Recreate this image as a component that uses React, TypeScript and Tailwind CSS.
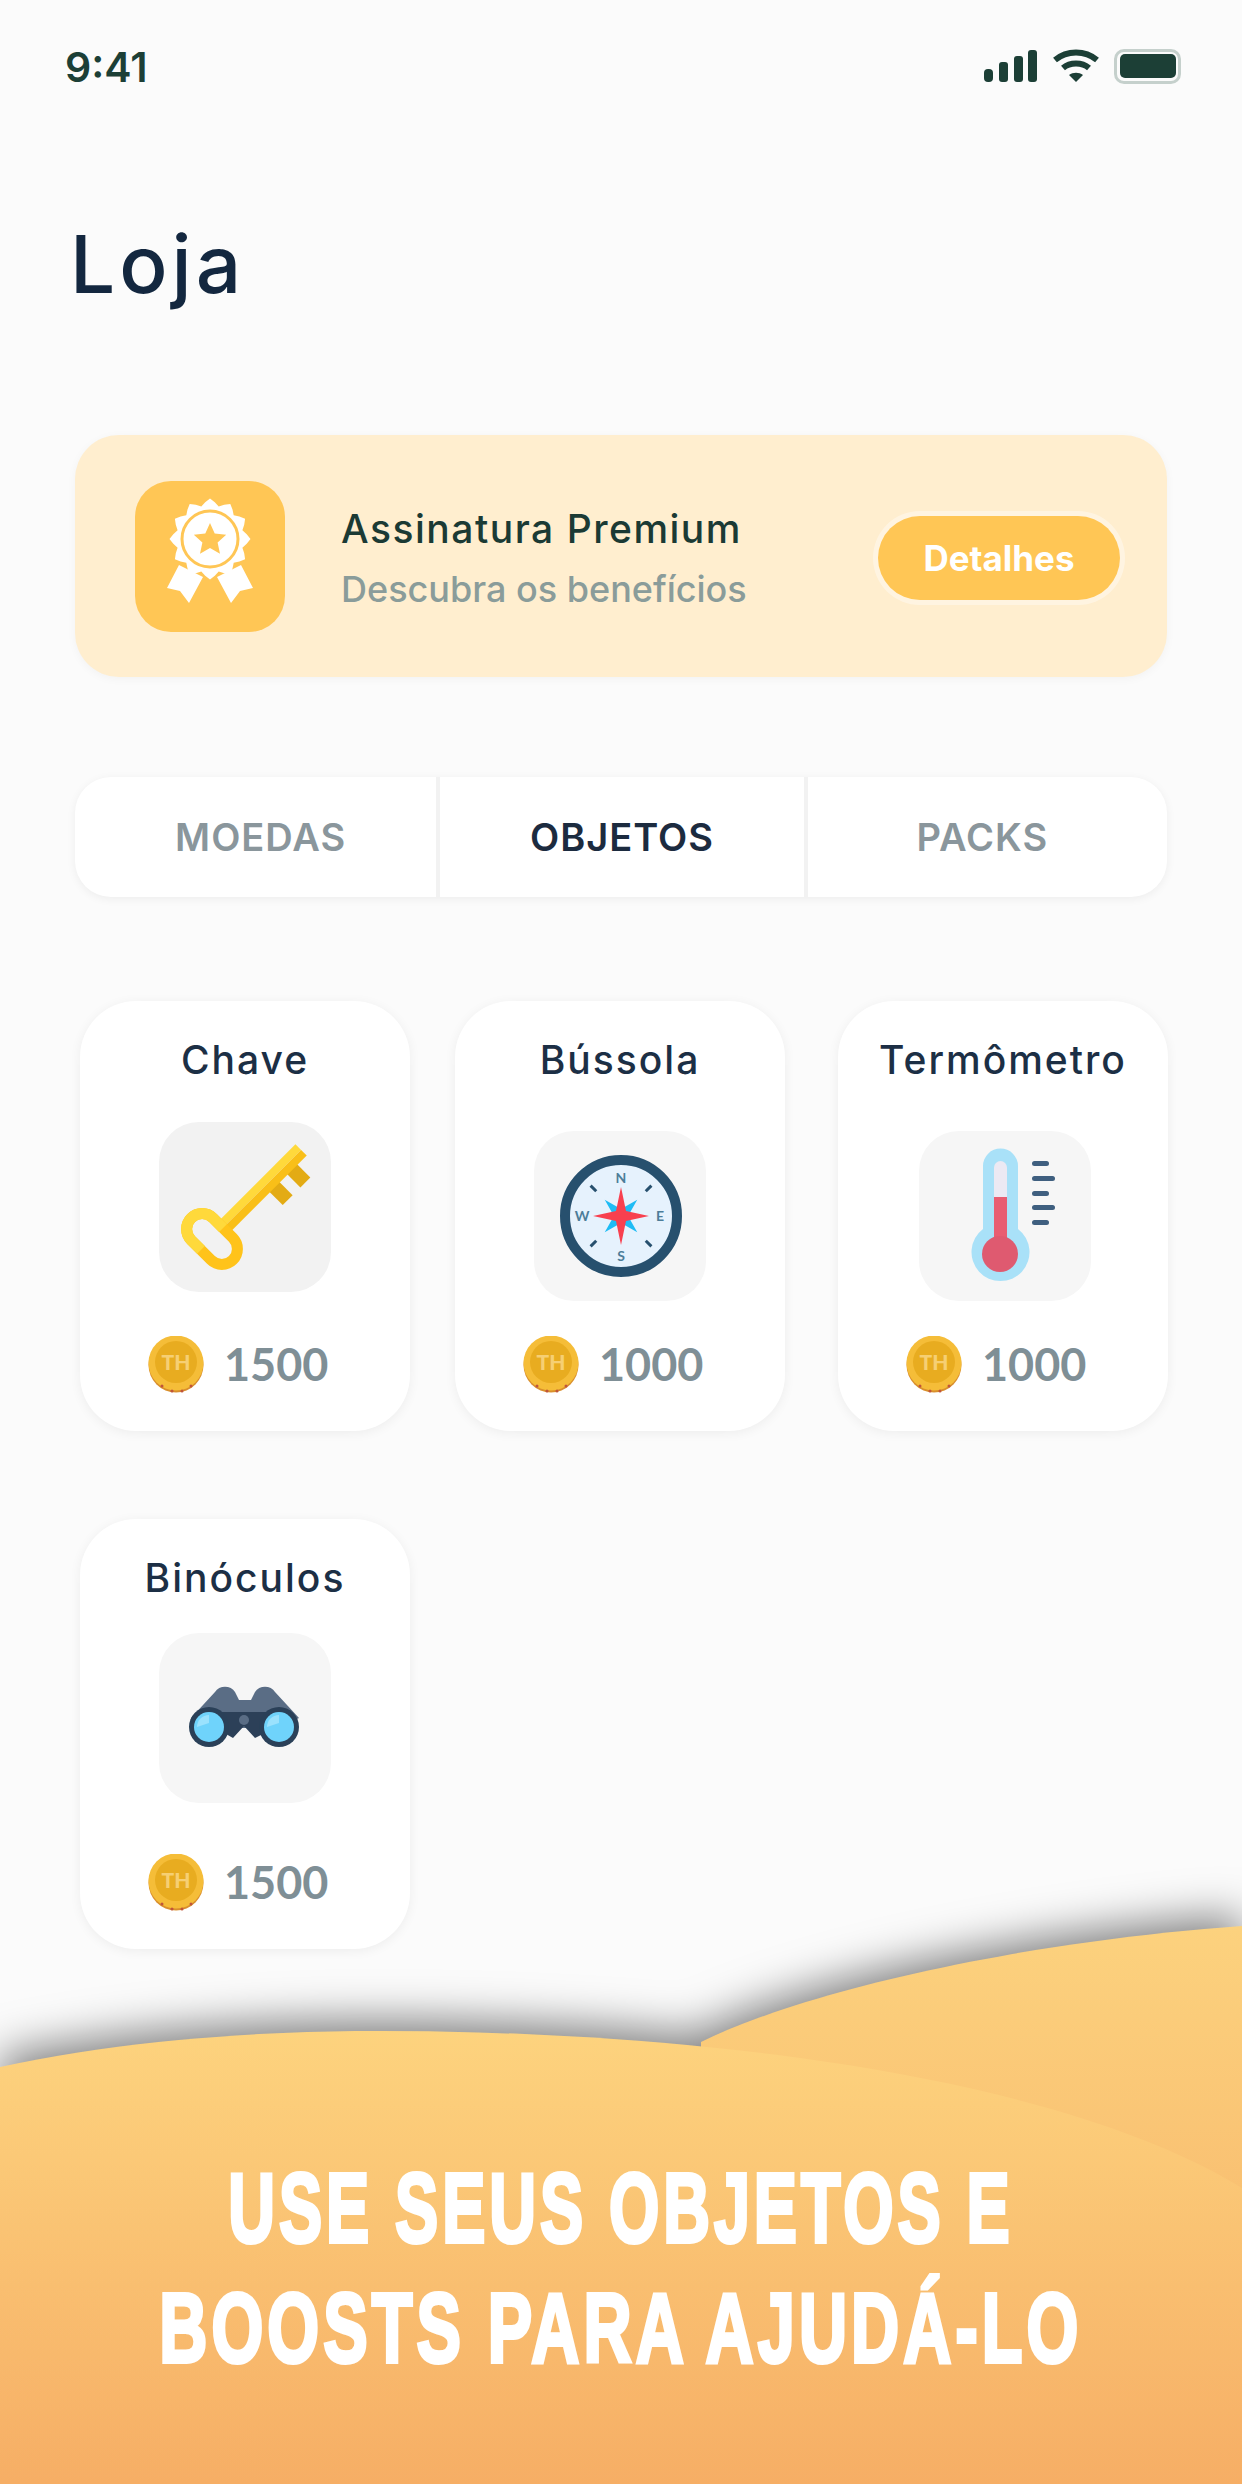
const sealPoints = Array.from({ length: 48 }, (_, i) => {
  const angle = (i / 48) * Math.PI * 2
  const radius = 37 + 3.5 * Math.cos(angle * 12)
  return `${(75 + radius * Math.sin(angle)).toFixed(1)},${(58 - radius * Math.cos(angle)).toFixed(1)}`
}).join(' ')

function star(cx: number, cy: number, outer: number, inner: number) {
  return Array.from({ length: 10 }, (_, i) => {
    const angle = (i / 10) * Math.PI * 2
    const radius = i % 2 === 0 ? outer : inner
    return `${(cx + radius * Math.sin(angle)).toFixed(1)},${(cy - radius * Math.cos(angle)).toFixed(1)}`
  }).join(' ')
}

function StatusIcons() {
  return (
    <div className="flex items-center gap-[14px]">
      <svg width="54" height="34" viewBox="0 0 54 34">
        <rect x="0" y="20" width="9" height="13" rx="4" fill="#1c3f36" />
        <rect x="15" y="13" width="9" height="20" rx="3" fill="#1c3f36" />
        <rect x="30" y="7" width="9" height="26" rx="3" fill="#1c3f36" />
        <rect x="44" y="1" width="9" height="32" rx="3" fill="#1c3f36" />
      </svg>
      <svg width="48" height="36" viewBox="0 0 48 36" fill="none" stroke="#1c3f36" strokeWidth="6">
        <path d="M3 12 C15 2 33 2 45 12" />
        <path d="M11 20 C18 14 30 14 37 20" />
        <path d="M24 34 L17 27 C21 24 27 24 31 27 Z" fill="#1c3f36" stroke="none" />
      </svg>
      <div className="flex h-[35px] w-[67px] items-center justify-center rounded-[10px] border-[3px] border-[#c5d0cc]">
        <div className="h-[24px] w-[56px] rounded-[5px] bg-[#1c3f36]" />
      </div>
    </div>
  )
}

function RibbonIcon() {
  return (
    <svg width="150" height="150" viewBox="0 0 150 150">
      <polygon points="44,84 32,107 45,110 54,122 68,96" fill="#fff" />
      <polygon points="106,84 118,107 105,110 96,122 82,96" fill="#fff" />
      <polygon points={sealPoints} fill="#fff" />
      <circle cx="75" cy="58" r="28" fill="none" stroke="#ffc655" strokeWidth="3" />
      <polygon points={star(75, 59, 17, 8)} fill="#ffc655" />
    </svg>
  )
}

function KeyIcon() {
  return (
    <svg width="172" height="170" viewBox="0 0 172 170">
      <g transform="translate(53 117) rotate(-45)">
        <rect x="74" y="6" width="14" height="20" fill="#e3ab14" />
        <rect x="99" y="6" width="14" height="20" fill="#e3ab14" />
        <rect x="20" y="-8" width="106" height="8" fill="#ffd93b" />
        <rect x="20" y="0" width="106" height="8" fill="#f9bf18" />
        <rect x="-15.500" y="-29.500" width="31" height="59" rx="15.500" fill="none" stroke="#ffc31a" strokeWidth="11" />
        <path d="M-15.500 0 V-14 a15.500 15.500 0 0 1 31 0 V0" fill="none" stroke="#ffd93b" strokeWidth="11" />
      </g>
    </svg>
  )
}

function CompassIcon() {
  const ticks = [45, 135, 225, 315]
  return (
    <svg width="172" height="170" viewBox="0 0 172 170">
      <circle cx="87" cy="85" r="56" fill="#e6f2fd" stroke="#27506e" strokeWidth="10" />
      {ticks.map((angle) => (
        <rect key={angle} x="85.500" y="42" width="3" height="8" fill="#27506e" transform={`rotate(${angle} 87 85)`} />
      ))}
      <g transform="rotate(45 87 85)">
        <polygon points="87,62 92,80 110,85 92,90 87,108 82,90 64,85 82,80" fill="#1ebcf5" />
      </g>
      <polygon points="87,56 92,80 115,85 92,90 87,114 82,90 59,85 82,80" fill="#f8404f" />
      <g fontFamily="Lato, sans-serif" fontSize="14" fontWeight="700" fill="#4d7d99" textAnchor="middle">
        <text x="87" y="52">N</text>
        <text x="87" y="130">S</text>
        <text x="48" y="90">W</text>
        <text x="126" y="90">E</text>
      </g>
    </svg>
  )
}

function ThermometerIcon() {
  return (
    <svg width="170" height="170" viewBox="0 0 170 170">
      <path d="M63 98 V35 a17.500 17.500 0 0 1 35 0 V98 a29 29 0 1 1 -35 0 Z" fill="#a9e1f8" />
      <rect x="74" y="30" width="13" height="44" rx="6.500" fill="#ece9f3" />
      <rect x="74" y="66" width="13" height="50" fill="#e85d72" />
      <circle cx="80" cy="123" r="18" fill="#df5a70" />
      <g fill="#3f5f7f">
        <rect x="112" y="30" width="17" height="5" rx="2.500" />
        <rect x="112" y="45" width="23" height="5" rx="2.500" />
        <rect x="112" y="60" width="17" height="5" rx="2.500" />
        <rect x="112" y="74" width="23" height="5" rx="2.500" />
        <rect x="112" y="89" width="17" height="5" rx="2.500" />
      </g>
    </svg>
  )
}

function BinocularsIcon() {
  return (
    <svg width="172" height="172" viewBox="0 0 172 172">
      <path d="M32 86 L56 60 C60 53 72 53 76 60 L80 68 H92 L96 60 C100 53 112 53 116 60 L140 86 L120 96 H52 Z" fill="#5a6d85" />
      <path d="M58 80 H114 L112 98 L96 106 L85 94 L74 106 L60 98 Z" fill="#2c4058" />
      <circle cx="85" cy="88" r="5" fill="#5a6d85" />
      <circle cx="50" cy="95" r="20" fill="#2a4058" />
      <circle cx="120" cy="95" r="20" fill="#2a4058" />
      <circle cx="50" cy="95" r="15" fill="#6fd3fb" />
      <circle cx="120" cy="95" r="15" fill="#6fd3fb" />
      <path d="M38 95 a12 12 0 0 1 12 -12 v8 Z" fill="#9be2fd" />
      <path d="M108 95 a12 12 0 0 1 12 -12 v8 Z" fill="#9be2fd" />
    </svg>
  )
}

function Coin() {
  return (
    <svg width="56" height="57" viewBox="0 0 56 57" className="shrink-0">
      <circle cx="28" cy="29" r="27.500" fill="#d98f2c" />
      <circle cx="28" cy="27" r="27.500" fill="#f5bd38" />
      <circle cx="28" cy="26" r="21" fill="#e8ac20" />
      <text x="28" y="34" textAnchor="middle" fontFamily="Lato, sans-serif" fontWeight="900" fontSize="21" fill="#f6cf73">
        TH
      </text>
      <g fill="#c0553a">
        <circle cx="14" cy="50" r="1.500" />
        <circle cx="24" cy="55" r="1.500" />
        <circle cx="34" cy="55" r="1.500" />
        <circle cx="43" cy="50" r="1.500" />
      </g>
    </svg>
  )
}

const tabs = [
  { label: 'MOEDAS', className: 'w-[362px] pl-[10px] text-[#8a969c]' },
  { label: 'OBJETOS', className: 'w-[372px] border-x-[4px] border-[#f2f2f2] text-[#1c2b3f]' },
  { label: 'PACKS', className: 'w-[360px] pr-[10px] text-[#8a969c]' },
]

interface CardProps {
  name: string
  price: number
  imageClass: string
  children: React.ReactNode
}

function Card({ name, price, imageClass, children }: CardProps) {
  return (
    <div className="flex h-[430px] w-[330px] flex-col items-center rounded-[56px] bg-white shadow-[0_2px_12px_rgba(0,0,0,0.06)]">
      <p className="mt-[37px] h-[44px] text-[39px] leading-[44px] font-medium tracking-[2px] text-[#1c2f45]">{name}</p>
      <div className={`flex h-[170px] w-[172px] items-center justify-center rounded-[40px] ${imageClass}`}>
        {children}
      </div>
      <div className="mt-auto mb-[38px] flex w-full items-center gap-[20px] pl-[68px]">
        <Coin />
        <span className="font-['Lato',sans-serif] text-[45px] leading-[57px] font-bold text-[#7f8f96]">{price}</span>
      </div>
    </div>
  )
}

export default function App() {
  return (
    <div className="relative h-[2484px] w-[1242px] overflow-hidden bg-[#fbfbfb] font-['Inter',sans-serif]">
      <div className="flex h-[89px] items-end justify-between pr-[61px] pl-[65px]">
        <span className="text-[41px] leading-[44px] font-semibold text-[#1c3f36]">9:41</span>
        <div className="mb-[5px]">
          <StatusIcons />
        </div>
      </div>

      <h1 className="mt-[135px] ml-[70px] text-[80px] leading-[80px] font-medium tracking-[4px] text-[#13273f]">Loja</h1>

      <div className="mx-[75px] mt-[131px] flex h-[242px] items-center rounded-[44px] bg-[#ffeecf] pr-[47px] pl-[60px] shadow-[0_2px_10px_rgba(0,0,0,0.04)]">
        <div className="flex h-[151px] w-[150px] items-center justify-center rounded-[36px] bg-[#ffc655]">
          <RibbonIcon />
        </div>
        <div className="mt-[6px] ml-[56px] flex flex-col gap-[16px]">
          <p className="text-[39px] leading-[44px] font-medium tracking-[1.5px] text-[#1b3a34]">Assinatura Premium</p>
          <p className="text-[36px] leading-[44px] font-medium text-[#8a9c9a]">Descubra os benefícios</p>
        </div>
        <button className="mt-[4px] ml-auto h-[84px] w-[242px] rounded-full bg-[#ffc655] text-[35px] font-bold text-white shadow-[0_0_0_5px_rgba(255,250,240,0.55)]">
          Detalhes
        </button>
      </div>

      <div className="mx-[75px] mt-[100px] flex h-[120px] rounded-[36px] bg-white shadow-[0_2px_10px_rgba(0,0,0,0.06)]">
        {tabs.map((tab) => (
          <div key={tab.label} className={`flex items-center justify-center text-[38px] font-semibold tracking-[1px] ${tab.className}`}>
            {tab.label}
          </div>
        ))}
      </div>

      <div className="mt-[104px] ml-[80px] flex">
        <Card name="Chave" price={1500} imageClass="mt-[40px] bg-[#f2f2f2]">
          <KeyIcon />
        </Card>
        <div className="ml-[45px]">
          <Card name="Bússola" price={1000} imageClass="mt-[49px] bg-[#f6f6f6]">
            <CompassIcon />
          </Card>
        </div>
        <div className="ml-[53px]">
          <Card name="Termômetro" price={1000} imageClass="mt-[49px] ml-[4px] bg-[#f6f6f6]">
            <ThermometerIcon />
          </Card>
        </div>
      </div>

      <div className="mt-[88px] ml-[80px]">
        <Card name="Binóculos" price={1500} imageClass="mt-[33px] bg-[#f6f6f6]">
          <BinocularsIcon />
        </Card>
      </div>

      <div className="absolute inset-x-0 bottom-0 h-[558px]">
        <div className="absolute inset-0 drop-shadow-[0_-10px_22px_rgba(0,0,0,0.5)]">
          <svg width="1242" height="558" viewBox="0 0 1242 558">
            <defs>
              <linearGradient id="back" gradientUnits="userSpaceOnUse" x1="0" y1="0" x2="0" y2="558">
                <stop offset="0" stopColor="#fcd27e" />
                <stop offset="1" stopColor="#f6ae65" />
              </linearGradient>
              <linearGradient id="front" gradientUnits="userSpaceOnUse" x1="0" y1="105" x2="0" y2="558">
                <stop offset="0" stopColor="#fdd37e" />
                <stop offset="1" stopColor="#f6ae65" />
              </linearGradient>
            </defs>
            <path d="M701 116 C810 62 1030 15 1242 0 V558 H701 Z" fill="url(#back)" />
            <path d="M0 141 C120 115 250 105 380 105 C700 105 1060 150 1242 262 V558 H0 Z" fill="url(#front)" />
          </svg>
        </div>
        <div className="relative flex flex-col items-center pt-[222px] font-['Liberation_Sans',sans-serif] text-[98px] leading-[120px] font-bold tracking-[6px] whitespace-nowrap text-white [-webkit-text-stroke:4px_white]">
          <p className="scale-x-[0.66]">USE SEUS OBJETOS E</p>
          <p className="scale-x-[0.68]">BOOSTS PARA AJUDÁ-LO</p>
        </div>
      </div>
    </div>
  )
}
